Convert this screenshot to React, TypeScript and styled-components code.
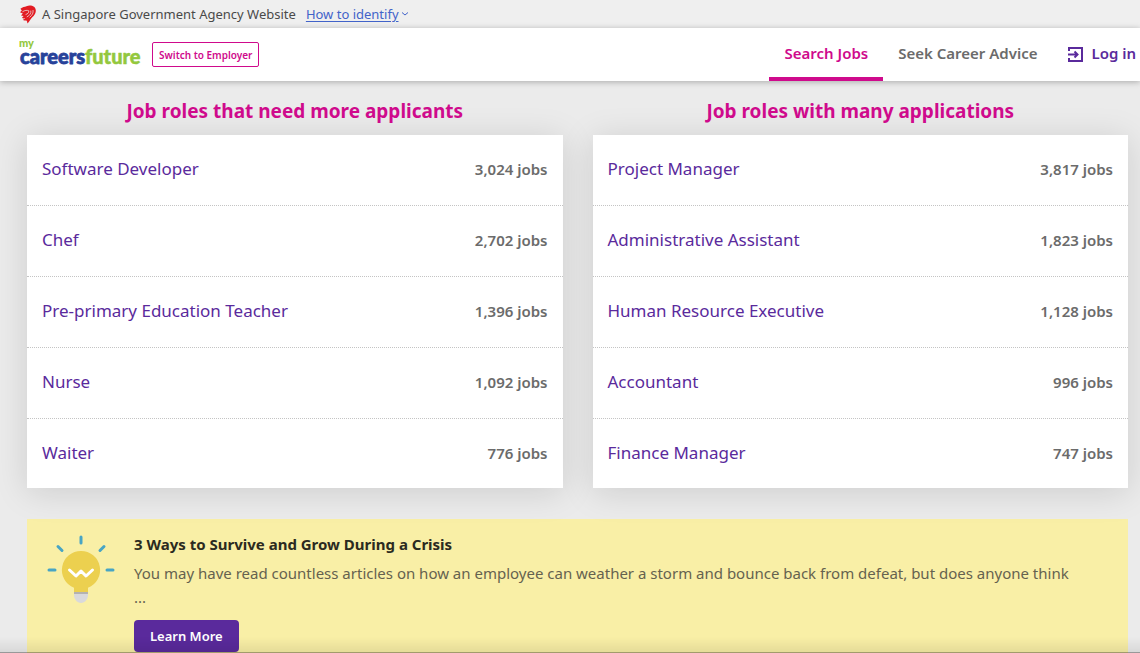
import React from "react";
import styled, { createGlobalStyle } from "styled-components";

const color = {
  pink: "#cf0a8c",
  purple: "#5a2a9c",
  grey: "#6b6b6b",
  page: "#ebebeb",
  link: "#4263c9",
};

const GlobalStyle = createGlobalStyle`
  *, *::before, *::after { box-sizing: border-box; }
  body {
    margin: 0;
    background: ${color.page};
    color: #4a4a4a;
    font-family: "Noto Sans", "Open Sans", sans-serif;
  }
  h1, h2, h3, p, ul { margin: 0; padding: 0; }
  a { text-decoration: none; color: inherit; }
`;

const Shell = styled.div`
  height: 100vh;
  overflow: hidden;
`;

const GovBar = styled.div`
  display: flex;
  align-items: center;
  height: 28px;
  padding-left: 20px;
  background: #efefef;
  font-size: 13px;
  line-height: 20px;
`;

const GovText = styled.span`
  margin: 0 10px 0 6px;
`;

const IdentifyLink = styled.a`
  display: flex;
  align-items: center;
  gap: 2px;
  color: ${color.link};

  span { text-decoration: underline; text-underline-offset: 2px; }
`;

const Header = styled.header`
  position: relative;
  display: flex;
  align-items: center;
  height: 53px;
  padding: 0 4px 0 19px;
  background: #fff;
  box-shadow: 0 1px 6px rgba(0, 0, 0, 0.28);
`;

const Brand = styled.a`
  display: block;
  width: 125px;
  height: 34px;
`;

const SwitchButton = styled.button`
  height: 25px;
  margin-left: 8px;
  padding: 0 6px;
  border: 1px solid ${color.pink};
  border-radius: 2px;
  background: #fff;
  color: ${color.pink};
  font: 600 10px/16px "Noto Sans", sans-serif;
`;

const Nav = styled.nav`
  display: flex;
  align-self: stretch;
  margin-left: auto;
`;

const NavLink = styled.a<{ $active?: boolean }>`
  display: flex;
  align-items: center;
  padding: 0 15px;
  border-bottom: 4px solid ${(p) => (p.$active ? color.pink : "transparent")};
  color: ${(p) => (p.$active ? color.pink : color.grey)};
  font-size: 15px;
  font-weight: 600;
  line-height: 24px;
`;

const LoginLink = styled(NavLink)`
  gap: 7px;
  padding-right: 0;
  color: ${color.purple};
`;

const Main = styled.main`
  padding: 16px 12px 0 27px;
`;

const Columns = styled.div`
  display: grid;
  grid-template-columns: 1fr 1fr;
  gap: 30px;
`;

const ListTitle = styled.h2`
  margin-bottom: 10px;
  color: ${color.pink};
  font-size: 19px;
  font-weight: 700;
  line-height: 28px;
  text-align: center;
`;

const JobList = styled.ul`
  list-style: none;
  background: #fff;
  box-shadow: 0 4px 32px rgba(0, 0, 0, 0.13);
`;

const JobRow = styled.li`
  display: flex;
  align-items: center;
  justify-content: space-between;
  height: 71px;
  padding: 0 15px 2px;
  border-bottom: 1px dotted #c4c4c4;
  line-height: 24px;

  &:last-child { height: 69px; border-bottom: 0; }
`;

const JobLink = styled.a`
  color: ${color.purple};
  font-size: 17px;
`;

const JobCount = styled.span`
  color: ${color.grey};
  font-size: 15px;
  font-weight: 600;
`;

const Banner = styled.section`
  display: flex;
  margin-top: 31px;
  padding: 14px 46px 30px 20px;
  background: #f9efa6;
`;

const BulbSlot = styled.div`
  flex: none;
  width: 87px;
  padding-top: 2px;
`;

const BannerTitle = styled.h3`
  color: #2b2a20;
  font-size: 15px;
  font-weight: 700;
  line-height: 22px;
`;

const BannerText = styled.p`
  margin: 6px 0 11px;
  color: #65624f;
  font-size: 15px;
  line-height: 24px;
`;

const LearnButton = styled.button`
  height: 32px;
  padding: 0 16px;
  border: 0;
  border-radius: 4px;
  background: ${color.purple};
  color: #fff;
  font: 600 13px/20px "Noto Sans", sans-serif;
`;

const BottomShade = styled.div`
  position: fixed;
  inset: auto 0 0 0;
  height: 16px;
  border-bottom: 1px solid rgba(0, 0, 0, 0.35);
  background: linear-gradient(rgba(0, 0, 0, 0), rgba(0, 0, 0, 0.08));
  pointer-events: none;
`;

const Lion = () => (
  <svg width="16" height="19" viewBox="0 0 16 19" aria-hidden="true">
    <path fill="#e21b22" d="M.4 3.800C2.600 1.600 4.600 2 6.400 1.200 9 .2 12 .4 14 1.800c1.800 1.400 2.200 4 1.400 6.200-.8 2.400-2.600 3.600-4 5.200-1.400 1.600-1.800 3.600-4.200 5.200.2-1.400 0-2-.8-2.800-1.200-.2-2.800.2-3.600-1 1.200-.2 2-.8 2.400-1.600-1.200.6-2.400.6-3.200-.2L3.600 11 1 10.600 2.800 8.400 0 7.200 1.800 5.600z" />
    <path fill="none" stroke="#efefef" strokeWidth=".7" d="M2.400 6.800C5 5.200 7 5 8.800 5.800c.2 2.200-1.200 3-3.200 3.800M10.800 5.600c.6 2.600-1 4.800-4 6.400M13 5c.6 2.800-.8 5.200-3.400 7.400" />
  </svg>
);

const Logo = () => (
  <svg width="125" height="34" viewBox="0 0 125 34" role="img" aria-label="MyCareersFuture">
    <g fontFamily="Lato, sans-serif" fontWeight="900" strokeLinejoin="round">
      <text x="0" y="9" fontSize="11" fill="#93c83e">my</text>
      <text x="1" y="26" fontSize="20" fill="#27429a" stroke="#27429a" strokeWidth=".8">
        careers<tspan fill="#93c83e" stroke="#93c83e" strokeWidth=".5">future</tspan>
      </text>
    </g>
  </svg>
);

const LoginIcon = () => (
  <svg width="17" height="20" viewBox="0 0 17 20" fill="none" stroke="currentColor" strokeWidth="2" aria-hidden="true">
    <path d="M2 8V5h13v13H2v-3M1 11.500h9M7.500 8.500l3 3-3 3" />
  </svg>
);

const Bulb = () => (
  <svg width="68" height="70" viewBox="0 0 68 70" aria-hidden="true">
    <g stroke="#48a5c4" strokeWidth="3" strokeLinecap="round">
      <path d="M34 2v6M11 11.500l4 4M57 11.500l-4 4M2 35h6M60 35h6" />
    </g>
    <path fill="#d9d9dc" d="M27 56h14v4c0 4-3 8-7 8s-7-4-7-8z" />
    <path fill="#b4b2b0" d="M27 56h14v3H27z" />
    <path fill="#ecd04f" d="M34 16a19 19 0 0 1 7 36.700V57H27v-4.300A19 19 0 0 1 34 16z" />
    <path fill="none" stroke="#fff" strokeWidth="3" strokeLinecap="round" strokeLinejoin="round" d="M22.500 35l6.500 6 5-5 5 5 6.500-6" />
  </svg>
);

type Job = { title: string; count: string };

const needed: Job[] = [
  { title: "Software Developer", count: "3,024" },
  { title: "Chef", count: "2,702" },
  { title: "Pre-primary Education Teacher", count: "1,396" },
  { title: "Nurse", count: "1,092" },
  { title: "Waiter", count: "776" },
];

const popular: Job[] = [
  { title: "Project Manager", count: "3,817" },
  { title: "Administrative Assistant", count: "1,823" },
  { title: "Human Resource Executive", count: "1,128" },
  { title: "Accountant", count: "996" },
  { title: "Finance Manager", count: "747" },
];

const JobPanel = ({ title, jobs }: { title: string; jobs: Job[] }) => (
  <section>
    <ListTitle>{title}</ListTitle>
    <JobList>
      {jobs.map((job) => (
        <JobRow key={job.title}>
          <JobLink href="#">{job.title}</JobLink>
          <JobCount>{job.count} jobs</JobCount>
        </JobRow>
      ))}
    </JobList>
  </section>
);

export default function App() {
  return (
    <Shell>
      <GlobalStyle />
      <GovBar>
        <Lion />
        <GovText>A Singapore Government Agency Website</GovText>
        <IdentifyLink href="#">
          <span>How to identify</span>
          <svg width="8" height="6" viewBox="0 0 8 6" fill="none" stroke="currentColor" aria-hidden="true">
            <path d="M1 1.500l3 2.500 3-2.500" />
          </svg>
        </IdentifyLink>
      </GovBar>
      <Header>
        <Brand href="#"><Logo /></Brand>
        <SwitchButton type="button">Switch to Employer</SwitchButton>
        <Nav>
          <NavLink href="#" $active>Search Jobs</NavLink>
          <NavLink href="#">Seek Career Advice</NavLink>
          <LoginLink href="#"><LoginIcon />Log in</LoginLink>
        </Nav>
      </Header>
      <Main>
        <Columns>
          <JobPanel title="Job roles that need more applicants" jobs={needed} />
          <JobPanel title="Job roles with many applications" jobs={popular} />
        </Columns>
        <Banner>
          <BulbSlot><Bulb /></BulbSlot>
          <div>
            <BannerTitle>3 Ways to Survive and Grow During a Crisis</BannerTitle>
            <BannerText>
              You may have read countless articles on how an employee can weather a storm and bounce back from defeat, but does anyone think ...
            </BannerText>
            <LearnButton type="button">Learn More</LearnButton>
          </div>
        </Banner>
      </Main>
      <BottomShade />
    </Shell>
  );
}
